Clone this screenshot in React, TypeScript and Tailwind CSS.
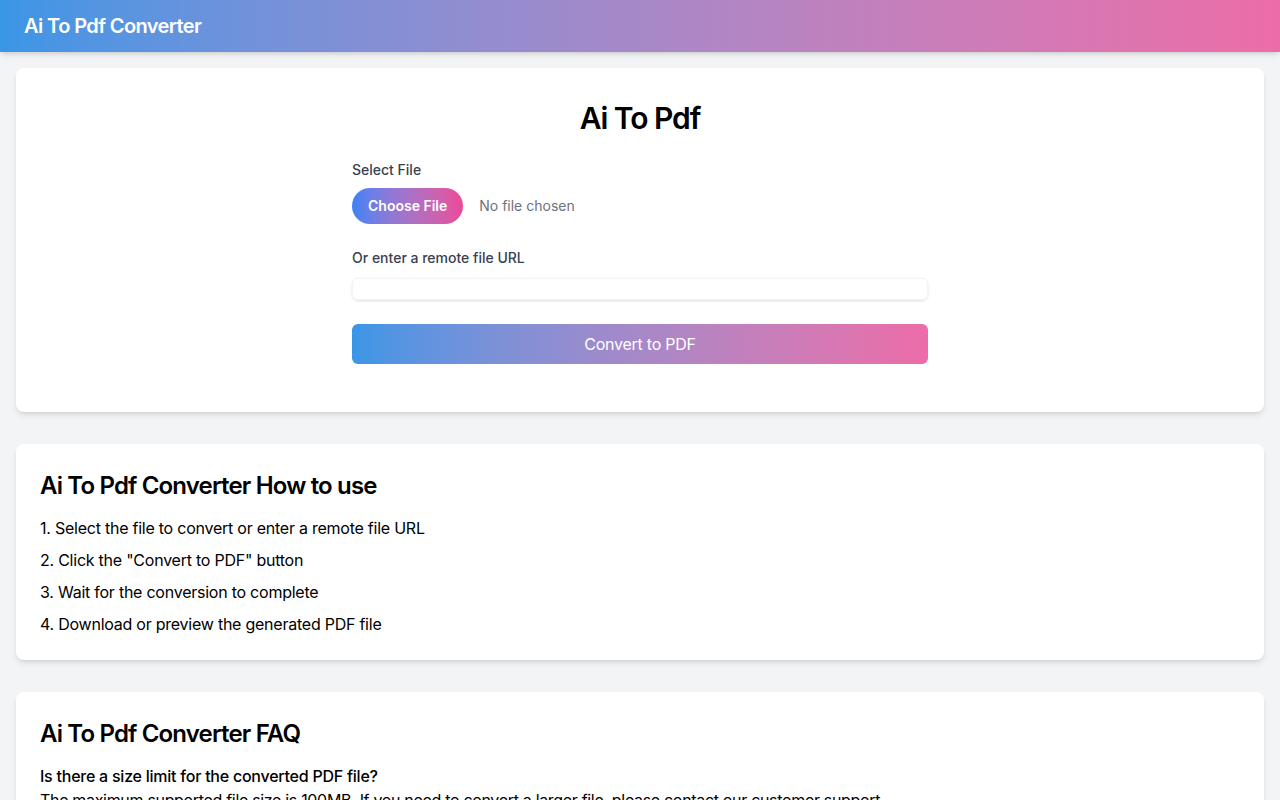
import { useState } from 'react';

const STEPS = [
  'Select the file to convert or enter a remote file URL',
  'Click the "Convert to PDF" button',
  'Wait for the conversion to complete',
  'Download or preview the generated PDF file',
];

const FAQ = [
  {
    q: 'Is there a size limit for the converted PDF file?',
    a: 'The maximum supported file size is 100MB. If you need to convert a larger file, please contact our customer support.',
  },
  {
    q: 'How long does the conversion take?',
    a: 'Most files are converted within a few seconds, depending on file size and server load.',
  },
];

export default function App() {
  const [url, setUrl] = useState('');

  return (
    <div className="min-h-screen bg-[#f3f4f6] font-['Inter',sans-serif] text-black">
      <header className="flex h-[52px] items-center bg-gradient-to-r from-[#3a96e6] to-[#ec6ca8] px-6 shadow-md">
        <h1 className="text-xl font-semibold tracking-[-0.03em] text-white">Ai To Pdf Converter</h1>
      </header>

      <main className="px-4 pt-4">
        <section className="rounded-lg bg-white px-6 pb-12 pt-8 shadow-md">
          <h2 className="text-center text-3xl font-semibold tracking-[-0.035em]">Ai To Pdf</h2>
          <div className="mx-auto mt-6 max-w-xl">
            <label className="block text-sm font-medium text-[#374151]">Select File</label>
            <div className="mt-2 flex items-center gap-4">
              <button className="h-9 rounded-full bg-gradient-to-r from-[#3b82f6] to-[#ec4899] px-4 text-sm font-semibold text-white">
                Choose File
              </button>
              <span className="text-sm text-[#6b7280]">No file chosen</span>
            </div>

            <label className="mt-6 block text-sm font-medium text-[#374151]">Or enter a remote file URL</label>
            <input
              value={url}
              onChange={e => setUrl(e.target.value)}
              className="mt-[10px] block h-[22px] w-full rounded-md border border-[#f3f4f6] px-3 text-sm shadow-sm outline-none"
            />

            <button className="mt-6 h-10 w-full rounded-md bg-gradient-to-r from-[#3a96e6] to-[#ec6ca8] text-base tracking-[-0.015em] text-white">
              Convert to PDF
            </button>
          </div>
        </section>

        <section className="mt-8 rounded-lg bg-white px-6 pb-6 pt-[26px] shadow-md">
          <h2 className="text-2xl font-semibold tracking-[-0.035em]">Ai To Pdf Converter How to use</h2>
          <ol className="mt-[14px] space-y-2 tracking-[-0.015em]">
            {STEPS.map((s, i) => (
              <li key={i} className="text-base">{i + 1}. {s}</li>
            ))}
          </ol>
        </section>

        <section className="mt-8 rounded-lg bg-white px-6 pb-6 pt-[26px] shadow-md">
          <h2 className="text-2xl font-semibold tracking-[-0.035em]">Ai To Pdf Converter FAQ</h2>
          <div className="mt-[14px] space-y-4 tracking-[-0.02em]">
            {FAQ.map(f => (
              <div key={f.q}>
                <h3 className="text-base font-medium tracking-[-0.015em]">{f.q}</h3>
                <p className="text-base">{f.a}</p>
              </div>
            ))}
          </div>
        </section>
      </main>
    </div>
  );
}
